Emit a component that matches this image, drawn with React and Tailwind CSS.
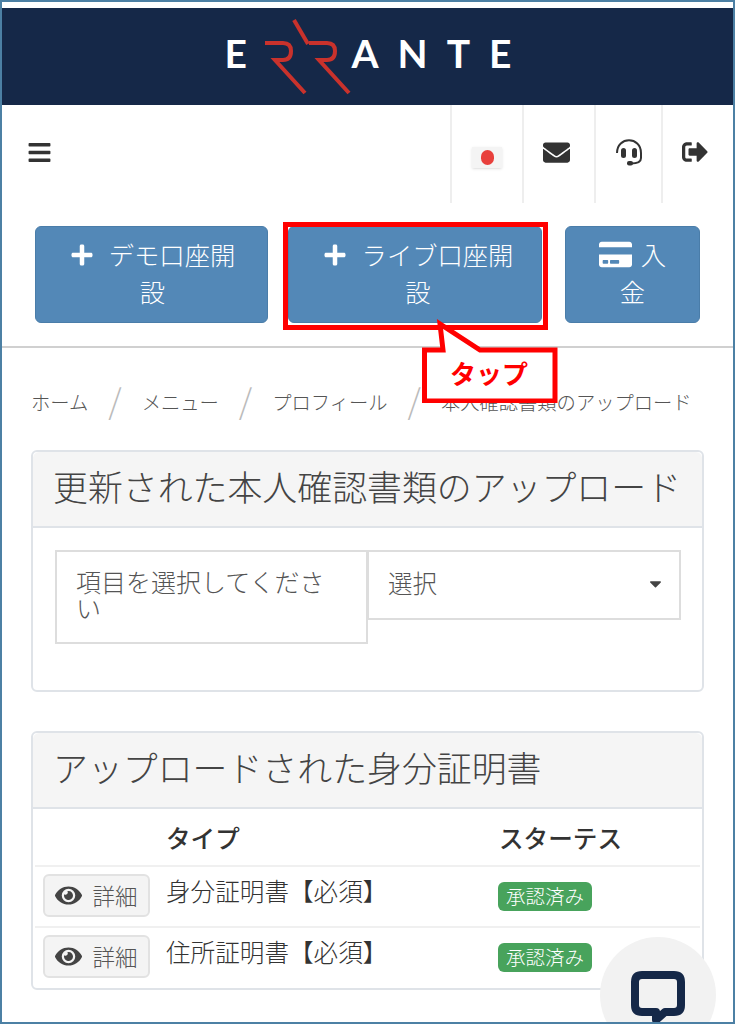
import { FaBars, FaEnvelope, FaSignOutAlt, FaPlus, FaCreditCard, FaEye, FaCaretDown } from 'react-icons/fa';

const JP = { fontFamily: '"Noto Sans CJK JP", "Noto Sans", sans-serif' };

function Logo() {
  return (
    <div className="relative h-[97px] w-[290px] text-white text-[39px] font-bold leading-[47px]" style={{ fontFamily: 'Lato, sans-serif' }}>
      <span className="absolute left-[0px] top-[22px]">E</span>
      <span className="absolute left-[127px] top-[22px] tracking-[19px]">ANTE</span>
      <svg width="100" height="90" viewBox="0 0 100 90" className="absolute left-[38px] top-[8px]">
        <g fill="none" stroke="#c9322c" strokeWidth="4">
          <path d="M31 4 L45 28" />
          <path d="M2 27 H20 Q28 27 28 35 Q28 44 20 44 H12 L42 77" />
          <path d="M46 27 H64 Q72 27 72 35 Q72 44 64 44 H56 L86 77" />
        </g>
      </svg>
    </div>
  );
}

function ToolCell({ w, children }) {
  return <div className={`${w} h-[98px] border-l-2 border-[#eeeeee] flex justify-center pt-[34px]`}>{children}</div>;
}

function Headset() {
  return (
    <svg width="28" height="28" viewBox="0 0 28 28" className="text-[#333] -mt-[1px]">
      <path d="M2 15 C2 -2 26 -2 26 15 V20 C26 24 21 25.5 16 25.5" fill="none" stroke="currentColor" strokeWidth="2" />
      <rect x="6" y="10" width="5" height="10" rx="2.5" fill="currentColor" />
      <rect x="17" y="10" width="5" height="10" rx="2.5" fill="currentColor" />
      <rect x="12" y="23" width="6" height="4.5" rx="2" fill="currentColor" />
    </svg>
  );
}

function ActionButton({ w, px, icon, label, gap }) {
  return (
    <button className={`${w} ${px} h-[97px] pb-[4px] shrink-0 rounded-md bg-[#5388b7] border border-[#4a7da9] text-white text-[25.3px] font-light leading-[37px] text-center`}>
      {icon}<span className={gap}>{label}</span>
    </button>
  );
}

function Panel({ title, className, children }) {
  return (
    <div className={`mx-[29px] border-2 border-[#dfe3e8] rounded-md bg-white ${className}`}>
      <div className="h-[76px] pb-[6px] bg-[#f5f5f5] border-b-2 border-[#dfe3e8] px-[20px] flex items-center text-[34.9px] font-light text-[#444] rounded-t-md whitespace-nowrap">
        {title}
      </div>
      {children}
    </div>
  );
}

function DocRow({ name }) {
  return (
    <div className="flex h-[61px] border-t-2 border-[#f0f0f0] mx-[2px]">
      <div className="w-[131px] pl-[8px] pt-[7px]">
        <button className="w-[107px] h-[43px] bg-[#f4f4f4] border-2 border-[#e2e2e2] rounded-md flex items-center justify-center gap-[10px] text-[22.5px] font-light text-[#555]">
          <FaEye className="text-[27px] text-[#444] shrink-0" />詳細
        </button>
      </div>
      <div className="w-[332px] text-[24.6px] text-[#333] font-light leading-[46px]">{name}</div>
      <div className="pt-[15px]">
        <span className="inline-block h-[29px] w-[94px] bg-[#48a35c] rounded-md text-white text-[19.5px] font-light leading-[27px] text-center">承認済み</span>
      </div>
    </div>
  );
}

function Slash() {
  return <span className="text-[#bbb] text-[34px] leading-[30px] font-light mx-[20px] -mt-[3px]">/</span>;
}

export default function App() {
  return (
    <div className="relative w-[735px] h-[1024px] overflow-hidden bg-white border-2 border-[#4c80a4]" style={JP}>
      <div className="h-[6px]" />
      <header className="h-[97px] bg-[#152848] flex justify-center pl-[4px]">
        <Logo />
      </header>

      <div className="h-[98px] flex justify-between pr-[6px] pl-[25px]">
        <FaBars className="text-[25px] mt-[35px] text-[#333]" />
        <div className="flex">
          <ToolCell w="w-[72px]">
            <div className="w-[30px] h-[21px] mt-[8px] bg-[#f4f4f4] flex items-center justify-center shadow-sm">
              <span className="w-[13px] h-[15px] rounded-full bg-[#e8403c]" />
            </div>
          </ToolCell>
          <ToolCell w="w-[72px]"><FaEnvelope className="text-[27px] text-[#333] -ml-[6px]" /></ToolCell>
          <ToolCell w="w-[67px]"><Headset /></ToolCell>
          <ToolCell w="w-[66px]"><FaSignOutAlt className="text-[26px] text-[#333]" /></ToolCell>
        </div>
      </div>

      <div className="h-[145px] border-b-2 border-[#d0d0d0] flex pt-[23px] pl-[33px]">
        <ActionButton w="w-[233px]" px="pl-[31px] pr-[29px]" gap="ml-[15px]" icon={<FaPlus className="inline text-[24px] -mt-[6px]" />} label="デモ口座開設" />
        <div className="w-[20px]" />
        <ActionButton w="w-[254px]" px="pl-[28px] pr-[22px]" gap="ml-[15px]" icon={<FaPlus className="inline text-[24px] -mt-[6px]" />} label="ライブ口座開設" />
        <div className="w-[23px]" />
        <ActionButton w="w-[135px]" px="px-[32px]" gap="ml-[9px]" icon={<FaCreditCard className="inline text-[33px] -mt-[6px]" />} label="入金" />
      </div>

      <nav className="h-[102px] pl-[29px] flex items-start pt-[40px] text-[19.3px] font-light text-[#555] whitespace-nowrap">
        <span>ホーム</span>
        <Slash />
        <span>メニュー</span>
        <Slash />
        <span>プロフィール</span>
        <Slash />
        <span>本人確認書類のアップロード</span>
      </nav>

      <Panel title="更新された本人確認書類のアップロード" className="h-[242px]">
        <div className="flex pl-[22px] pt-[22px]">
          <div className="w-[313px] h-[94px] border-2 border-[#dddddd] px-[19px] pt-[16px] text-[25px] font-light leading-[26px] text-[#555]">
            項目を選択してください
          </div>
          <div className="w-[314px] h-[70px] -ml-[1px] pb-[4px] border-2 border-[#dddddd] pl-[19px] pr-[14px] flex items-center justify-between text-[24.5px] font-light text-[#555]">
            選択<FaCaretDown className="text-[19px] text-[#444]" />
          </div>
        </div>
      </Panel>

      <Panel title="アップロードされた身分証明書" className="mt-[39px] h-[259px]">
        <div className="flex h-[56px] items-center font-medium text-[24.6px] text-[#333]">
          <div className="w-[133px]" />
          <div className="w-[333px]">タイプ</div>
          <div>スターテス</div>
        </div>
        <DocRow name="身分証明書【必須】" />
        <DocRow name="住所証明書【必須】" />
      </Panel>

      <div className="absolute left-[281px] top-[220px] w-[265px] h-[108px] border-[5px] border-[#ff0000]" />

      <svg width="140" height="84" className="absolute left-[419px] top-[317px]">
        <path d="M3.5 31 H22 L19 5 L59 31 H134 V82 H3.5 Z" fill="#fff" stroke="#ff0000" strokeWidth="5" />
      </svg>
      <span className="absolute left-[448px] top-[353px] text-[26px] leading-[36px] font-bold text-[#ff0000]">タップ</span>

      <div className="absolute left-[598px] top-[935px] w-[116px] h-[116px] rounded-full bg-[#f2f2f2] flex items-start justify-center pt-[34px]">
        <svg width="56" height="56" viewBox="0 0 56 56">
          <path d="M12 4 H44 Q51 4 51 11 V34 Q51 41 44 41 H35 L26 49 V41 H12 Q5 41 5 34 V11 Q5 4 12 4 Z" fill="none" stroke="#152848" strokeWidth="8" strokeLinejoin="round" />
        </svg>
      </div>
    </div>
  );
}
